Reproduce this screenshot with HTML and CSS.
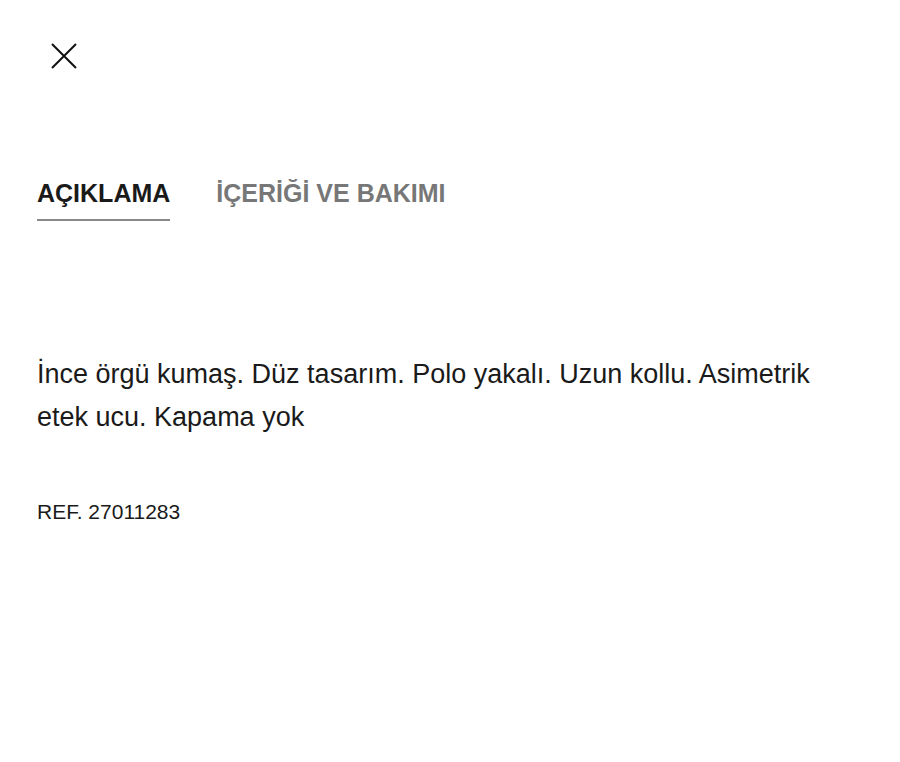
FILE: index.html
```html
<!DOCTYPE html>
<html lang="tr">
<head>
<meta charset="utf-8">
<link rel="stylesheet" href="styles.css">
</head>
<body>
<div class="page">
  <button class="close" aria-label="Kapat">
    <svg width="28" height="28" viewBox="0 0 28 28"><path d="M2 2 L26 26 M26 2 L2 26" stroke="#111" stroke-width="2" fill="none"/></svg>
  </button>
  <nav class="tabs">
    <div class="tab active">AÇIKLAMA</div>
    <div class="tab">İÇERİĞİ VE BAKIMI</div>
  </nav>
  <p class="desc">İnce örgü kumaş. Düz tasarım. Polo yakalı. Uzun kollu. Asimetrik etek ucu. Kapama yok</p>
  <p class="ref">REF. 27011283</p>
</div>
</body>
</html>
```
FILE: styles.css
```css
html, body { margin: 0; padding: 0; background: #fff; }
body { font-family: "Liberation Sans", Arial, sans-serif; color: #1a1a1a; }
.page { padding: 42px 37px 0 37px; width: 800px; }
.close { display: block; margin-left: 13px; padding: 0; border: 0; background: none; width: 28px; height: 28px; }
.close svg { display: block; }
.tabs { display: flex; gap: 46px; margin-top: 109px; }
.tab { font-size: 25px; font-weight: bold; letter-spacing: 0; color: #777; padding-bottom: 12px; line-height: 28px; }
.tab.active { color: #1a1a1a; border-bottom: 2px solid #888; }
.desc { font-size: 27px; line-height: 43px; margin: 132px 0 0 0; font-weight: normal; }
.ref { font-size: 21px; margin: 61px 0 0 0; }
```
